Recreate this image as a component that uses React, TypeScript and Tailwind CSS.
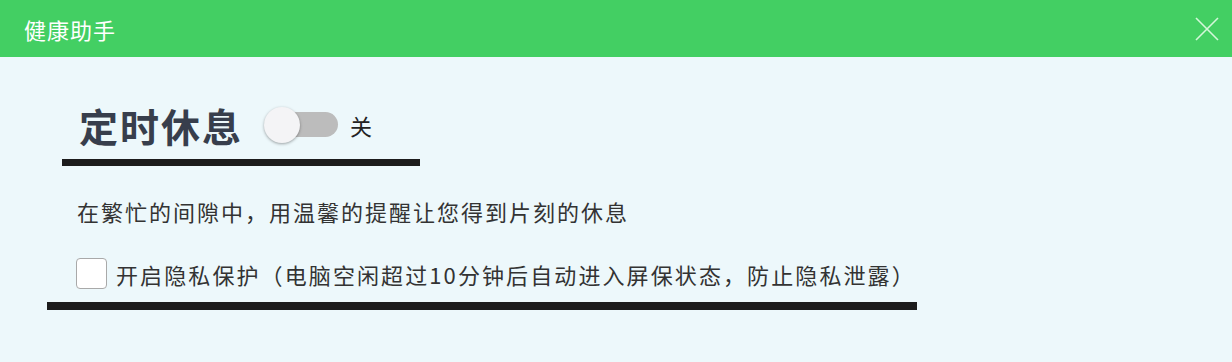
import React, { useState } from 'react';

const font = { fontFamily: '"Noto Sans CJK SC", "Noto Sans", sans-serif' };

const App: React.FC = () => {
  const [on, setOn] = useState(false);
  const [privacy, setPrivacy] = useState(false);

  return (
    <div className="w-[1232px] h-[362px] bg-[#edf8fb] overflow-hidden" style={font}>
      {/* header */}
      <div className="h-[57px] bg-[#43cf63] flex items-center justify-between pl-[24px] pr-[12px]">
        <span className="text-white text-[22px] leading-none tracking-[1px]">健康助手</span>
        <button className="w-[24px] h-[24px] mr-[1px]" aria-label="close">
          <svg viewBox="0 0 24 24" className="w-[24px] h-[24px]" fill="none" stroke="#d4f7da" strokeWidth="1.6">
            <path d="M1 1 L23 23 M23 1 L1 23" />
          </svg>
        </button>
      </div>

      <div className="pt-[45px]">
        <div className="flex items-center ml-[79px] h-[46px]">
          <h1 className="text-[39px] font-bold leading-none tracking-[2px] text-[#373e4c]">定时休息</h1>
          <div className="relative w-[74px] h-[36px] ml-[21px] cursor-pointer" onClick={() => setOn(!on)}>
            <div className={`absolute left-[16px] top-[5px] w-[58px] h-[25px] rounded-full ${on ? 'bg-[#43cf63]' : 'bg-[#bcbcbc]'}`} />
            <div className={`absolute top-0 w-[36px] h-[36px] rounded-full bg-[#f4f4f6] shadow-[0_1px_3px_rgba(0,0,0,0.35)] ${on ? 'left-[38px]' : 'left-0'}`} />
          </div>
          <span className="ml-[12px] text-[22px] leading-none text-[#222]">{on ? '开' : '关'}</span>
        </div>

        <div className="mt-[11px] ml-[62px] w-[358px] h-[7px] bg-[#1c1c1c]" />

        <p className="mt-[32px] ml-[77px] text-[22px] leading-[26px] tracking-[2px] text-[#333]">
          在繁忙的间隙中，用温馨的提醒让您得到片刻的休息
        </p>

        <label className="mt-[34px] ml-[76px] flex items-center h-[31px] cursor-pointer">
          <input
            type="checkbox"
            checked={privacy}
            onChange={() => setPrivacy(!privacy)}
            className="appearance-none w-[31px] h-[31px] rounded-[4px] border border-[#a9a9a9] bg-white checked:bg-[#43cf63]"
          />
          <span className="ml-[9px] text-[22px] leading-[26px] tracking-[2.1px] text-[#333]">
            开启隐私保护（电脑空闲超过10分钟后自动进入屏保状态，防止隐私泄露）
          </span>
        </label>

        <div className="mt-[13px] ml-[47px] w-[870px] h-[8px] bg-[#1c1c1c]" />
      </div>
    </div>
  );
};

export default App;
